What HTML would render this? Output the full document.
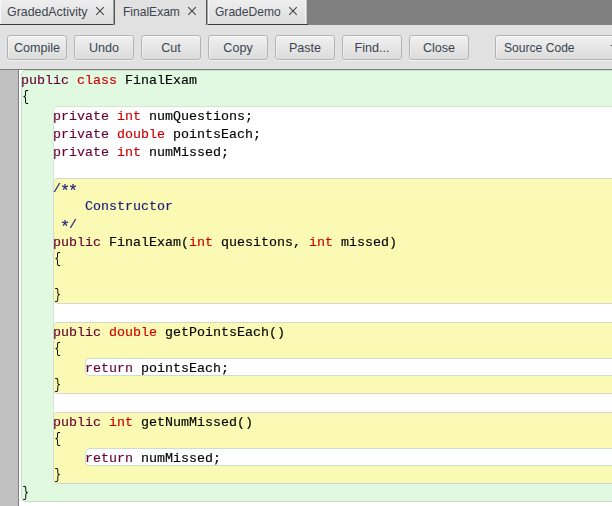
<!DOCTYPE html>
<html>
<head>
<meta charset="utf-8">
<title>FinalExam - BlueJ</title>
<style>
html,body{margin:0;padding:0;}
body{width:612px;height:506px;overflow:hidden;position:relative;background:#e1e1e1;font-family:"Liberation Sans",sans-serif;}
.abs{position:absolute;}
/* ---------- tab strip ---------- */
#tabstrip{left:0;top:0;width:612px;height:25px;background:#808080;}
.tab{position:absolute;top:0;height:24px;background:linear-gradient(#eeeeee,#dddddd);border-bottom:1px solid #3c3c3c;box-sizing:content-box;}
.tab .lbl{position:absolute;top:5px;font-size:12.5px;line-height:15px;color:#3d4450;white-space:nowrap;}
.tab svg{position:absolute;top:6px;width:10px;height:10px;}
#tab1{left:0;width:115px;}
#tab2{left:115px;width:91px;background:#e1e1e1;border-bottom:1px solid #e1e1e1;}
#tab3{left:206px;width:102px;}
.vl{position:absolute;top:0;width:1px;height:25px;}
/* ---------- toolbar ---------- */
#toolbar{left:0;top:25px;width:612px;height:44px;background:#e1e1e1;border-bottom:1px solid #7f7f7f;}
.btn{position:absolute;top:10px;width:58px;height:23px;border:1px solid #b4b4b4;border-radius:3px;background:linear-gradient(#f0f0f0,#dcdcdc);box-shadow:0 1px 0 #f2f2f2, inset 0 1px 0 #fafafa, inset 1px 0 0 #f0f0f0;font-size:12.6px;line-height:25px;text-align:center;color:#3d4450;}
/* ---------- editor ---------- */
#editor{left:0;top:70px;width:612px;height:436px;background:#ffffff;overflow:hidden;}
#gutter{left:0;top:0;width:18px;height:436px;background:#c0c0c0;border-right:1px solid #808080;}
.scope{position:absolute;box-sizing:border-box;border-style:solid;border-width:1px 0 1px 1px;border-radius:5px 0 0 5px;right:0;}
.green{background:#e1f8e1;border-color:#c4e0c4;}
.white{background:#ffffff;border-color:#d2e6d2;}
.yellow{background:#fafab4;border-color:#d6d6d0;}
.inner{background:#ffffff;border-color:#cbdfce;}
pre#code{position:absolute;left:21px;top:2px;margin:0;font-family:"Liberation Mono",monospace;font-size:13.33px;line-height:18px;color:#000;white-space:pre;will-change:transform;-webkit-text-stroke:0.15px;}
.k1{color:#660033;}
.k2{color:#cc0000;}
.jd{color:#1a1a80;}
.jd i{font-style:normal;display:inline-block;transform:translateY(3.4px) scale(1.25);}
.br{display:inline-block;transform:translate(0.6px,-0.9px) scale(0.85,1.08);-webkit-text-stroke:0;}
</style>
</head>
<body>
<div id="tabstrip" class="abs">
  <div id="tab1" class="tab"><div class="vl" style="left:0;background:#f6f6f6;height:24px"></div><div class="vl" style="left:113px;background:#a0a0a0"></div><div class="vl" style="left:114px;background:#555"></div><span class="lbl" style="left:7px;font-size:12.4px">GradedActivity</span><svg style="left:95px" viewBox="0 0 10 10"><path d="M1.2 1.2 L8.8 8.8 M8.8 1.2 L1.2 8.8" stroke="#484848" stroke-width="1.15" fill="none"/></svg></div>
  <div id="tab2" class="tab"><span class="lbl" style="left:8px;font-size:12.05px">FinalExam</span><svg style="left:72px" viewBox="0 0 10 10"><path d="M1.2 1.2 L8.8 8.8 M8.8 1.2 L1.2 8.8" stroke="#484848" stroke-width="1.15" fill="none"/></svg></div>
  <div id="tab3" class="tab"><div class="vl" style="left:0;background:#555"></div><div class="vl" style="left:1px;background:#a8a8a8"></div><div class="vl" style="left:2px;background:#f6f6f6;height:24px"></div><div class="vl" style="left:99px;background:#f4f4f4;height:24px"></div><div class="vl" style="left:100px;background:#c4c4c4;height:24px"></div><div class="vl" style="left:101px;background:#808080;height:24px"></div><span class="lbl" style="left:9px;font-size:12.05px">GradeDemo</span><svg style="left:82px" viewBox="0 0 10 10"><path d="M1.2 1.2 L8.8 8.8 M8.8 1.2 L1.2 8.8" stroke="#484848" stroke-width="1.15" fill="none"/></svg></div>
</div>
<div id="toolbar" class="abs">
  <div class="btn" style="left:7px">Compile</div>
  <div class="btn" style="left:74px">Undo</div>
  <div class="btn" style="left:141px">Cut</div>
  <div class="btn" style="left:208px">Copy</div>
  <div class="btn" style="left:275px">Paste</div>
  <div class="btn" style="left:342px">Find...</div>
  <div class="btn" style="left:409px">Close</div>
  <div class="btn" style="left:495px;width:140px;text-align:left;"><span style="padding-left:8px;font-size:12.1px">Source Code</span><div style="position:absolute;left:114px;top:9px;width:3px;height:1px;background:#a0a0a0"></div><div style="position:absolute;left:115px;top:9px;width:2px;height:1px;background:#5a5a5a"></div></div>
</div>
<div id="editor" class="abs">
  <div id="gutter" class="abs"></div>
  <div class="scope green" style="left:21px;top:0;height:432px;"></div>
  <div class="scope white" style="left:53px;top:36px;height:378px;"></div>
  <div class="scope yellow" style="left:53px;top:108px;height:126px;"></div>
  <div class="scope yellow" style="left:53px;top:252px;height:72px;"></div>
  <div class="scope inner" style="left:85px;top:288px;height:18px;"></div>
  <div class="scope yellow" style="left:53px;top:342px;height:72px;"></div>
  <div class="scope inner" style="left:85px;top:378px;height:18px;"></div>
<pre id="code"><span class="k1">public</span> <span class="k2">class</span> FinalExam
<span class="br">{</span>
    <span class="k1">private</span> <span class="k2">int</span> numQuestions;
    <span class="k1">private</span> <span class="k2">double</span> pointsEach;
    <span class="k1">private</span> <span class="k2">int</span> numMissed;

<span class="jd">    /<i>*</i><i>*</i>
        Constructor
     <i>*</i>/</span>
    <span class="k1">public</span> FinalExam(<span class="k2">int</span> quesitons, <span class="k2">int</span> missed)
    <span class="br">{</span>

    <span class="br">}</span>

    <span class="k1">public</span> <span class="k2">double</span> getPointsEach()
    <span class="br">{</span>
        <span class="k1">return</span> pointsEach;
    <span class="br">}</span>

    <span class="k1">public</span> <span class="k2">int</span> getNumMissed()
    <span class="br">{</span>
        <span class="k1">return</span> numMissed;
    <span class="br">}</span>
<span class="br">}</span></pre>
</div>
</body>
</html>
